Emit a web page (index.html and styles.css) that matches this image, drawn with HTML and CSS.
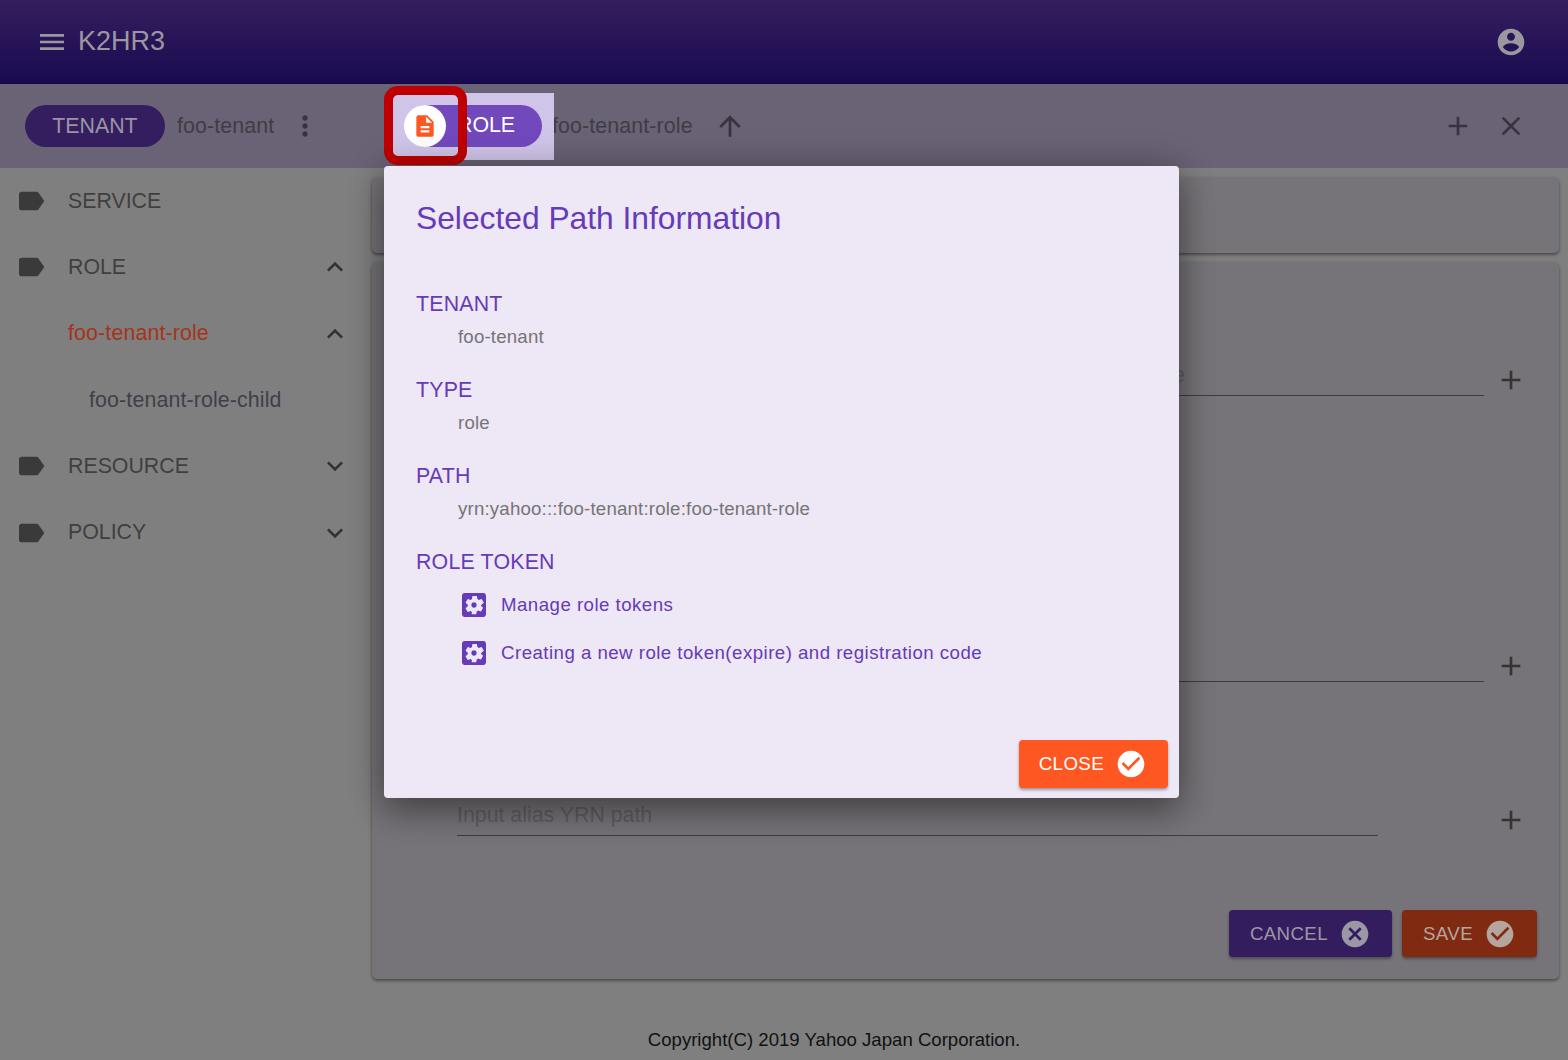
FILE: index.html
```html
<!DOCTYPE html>
<html lang="en">
<head>
    <meta charset="UTF-8">
    <title>K2HR3</title>
    <link rel="stylesheet" href="styles.css">
</head>
<body>
    <svg class="icon-defs" aria-hidden="true">
        <symbol id="i-menu" viewBox="0 0 24 24"><path d="M3 18h18v-2H3v2zm0-5h18v-2H3v2zm0-7v2h18V6H3z"/></symbol>
        <symbol id="i-account" viewBox="0 0 24 24"><path d="M12 2C6.48 2 2 6.48 2 12s4.48 10 10 10 10-4.48 10-10S17.52 2 12 2zm0 3c1.66 0 3 1.34 3 3s-1.34 3-3 3-3-1.34-3-3 1.34-3 3-3zm0 14.2c-2.5 0-4.71-1.28-6-3.22.03-1.99 4-3.08 6-3.08 1.99 0 5.97 1.09 6 3.08-1.29 1.94-3.5 3.22-6 3.22z"/></symbol>
        <symbol id="i-more" viewBox="0 0 24 24"><path d="M12 8c1.1 0 2-.9 2-2s-.9-2-2-2-2 .9-2 2 .9 2 2 2zm0 2c-1.1 0-2 .9-2 2s.9 2 2 2 2-.9 2-2-.9-2-2-2zm0 6c-1.1 0-2 .9-2 2s.9 2 2 2 2-.9 2-2-.9-2-2-2z"/></symbol>
        <symbol id="i-doc" viewBox="0 0 24 24"><path d="M14 2H6c-1.1 0-1.99.9-1.99 2L4 20c0 1.1.89 2 1.99 2H18c1.1 0 2-.9 2-2V8l-6-6zm2 16H8v-2h8v2zm0-4H8v-2h8v2zm-3-5V3.5L18.5 9H13z"/></symbol>
        <symbol id="i-up" viewBox="0 0 24 24"><path d="M4 12l1.41 1.41L11 7.83V20h2V7.83l5.58 5.59L20 12l-8-8-8 8z"/></symbol>
        <symbol id="i-add" viewBox="0 0 24 24"><path d="M19 13h-6v6h-2v-6H5v-2h6V5h2v6h6v2z"/></symbol>
        <symbol id="i-close" viewBox="0 0 24 24"><path d="M19 6.41L17.59 5 12 10.59 6.41 5 5 6.41 10.59 12 5 17.59 6.41 19 12 13.41 17.59 19 19 17.59 13.41 12 19 6.41z"/></symbol>
        <symbol id="i-label" viewBox="0 0 24 24"><path d="M17.63 5.84C17.27 5.33 16.67 5 16 5L5 5.01C3.9 5.01 3 5.9 3 7v10c0 1.1.9 1.99 2 1.99L16 19c.67 0 1.27-.33 1.63-.84L22 12l-4.37-6.16z"/></symbol>
        <symbol id="i-less" viewBox="0 0 24 24"><path d="M12 8l-6 6 1.41 1.41L12 10.83l4.59 4.58L18 14z"/></symbol>
        <symbol id="i-expand" viewBox="0 0 24 24"><path d="M16.59 8.59L12 13.17 7.41 8.59 6 10l6 6 6-6z"/></symbol>
        <symbol id="i-check" viewBox="0 0 24 24"><path d="M12 2C6.48 2 2 6.48 2 12s4.48 10 10 10 10-4.48 10-10S17.52 2 12 2zm-2 15l-5-5 1.41-1.41L10 14.17l7.59-7.59L19 8l-9 9z"/></symbol>
        <symbol id="i-cancel" viewBox="0 0 24 24"><path d="M12 2C6.47 2 2 6.47 2 12s4.47 10 10 10 10-4.47 10-10S17.53 2 12 2zm5 13.59L15.59 17 12 13.41 8.41 17 7 15.59 10.59 12 7 8.41 8.41 7 12 10.59 15.59 7 17 8.41 13.41 12 17 15.59z"/></symbol>
        <symbol id="i-gear" viewBox="0 0 24 24"><path d="M12 10c-1.1 0-2 .9-2 2s.9 2 2 2 2-.9 2-2-.9-2-2-2zm7-7H5c-1.1 0-2 .9-2 2v14c0 1.1.9 2 2 2h14c1.1 0 2-.9 2-2V5c0-1.1-.9-2-2-2zm-1.75 9c0 .23-.02.46-.05.68l1.48 1.16c.13.11.17.3.08.45l-1.4 2.42c-.09.15-.27.21-.43.15l-1.74-.7c-.36.28-.76.51-1.18.69l-.26 1.85c-.03.17-.18.3-.35.3h-2.8c-.17 0-.32-.13-.35-.3L10.5 17.2c-.43-.18-.82-.41-1.18-.69l-1.74.7c-.16.06-.34 0-.43-.15l-1.4-2.42c-.09-.15-.05-.34.08-.45l1.48-1.16c-.03-.23-.05-.46-.05-.69 0-.23.02-.46.05-.68l-1.48-1.16c-.13-.11-.17-.3-.08-.45l1.4-2.42c.09-.15.27-.21.43-.15l1.74.7c.36-.28.76-.51 1.18-.69l.26-1.85c.03-.17.18-.3.35-.3h2.8c.17 0 .32.13.35.3l.26 1.85c.43.18.82.41 1.18.69l1.74-.7c.16-.06.34 0 .43.15l1.4 2.42c.09.15.05.34-.08.45l-1.48 1.16c.03.23.05.46.05.69z"/></symbol>
    </svg>

    <header class="appbar">
        <svg class="icon appbar-menu"><use href="#i-menu"/></svg>
        <span class="appbar-title">K2HR3</span>
        <svg class="icon appbar-account"><use href="#i-account"/></svg>
    </header>

    <div class="toolbar">
        <div class="toolbar-tenant">
            <span class="chip chip-tenant">TENANT</span>
            <span class="toolbar-name">foo-tenant</span>
            <svg class="icon toolbar-more"><use href="#i-more"/></svg>
        </div>
        <div class="toolbar-role">
            <div class="highlight">
                <span class="chip chip-role">
                    <span class="chip-avatar"><svg class="chip-doc"><use href="#i-doc"/></svg></span>
                    <span class="chip-text">ROLE</span>
                </span>
                <span class="highlight-frame"></span>
            </div>
            <span class="toolbar-name toolbar-path">foo-tenant-role</span>
            <svg class="icon toolbar-up"><use href="#i-up"/></svg>
            <svg class="icon toolbar-add"><use href="#i-add"/></svg>
            <svg class="icon toolbar-close"><use href="#i-close"/></svg>
        </div>
    </div>

    <div class="content">
        <nav class="sidebar">
            <div class="nav-item">
                <svg class="icon nav-icon"><use href="#i-label"/></svg>
                <span class="nav-text">SERVICE</span>
            </div>
            <div class="nav-item">
                <svg class="icon nav-icon"><use href="#i-label"/></svg>
                <span class="nav-text">ROLE</span>
                <svg class="icon nav-arrow"><use href="#i-less"/></svg>
            </div>
            <div class="nav-item nav-sub nav-active">
                <span class="nav-text">foo-tenant-role</span>
                <svg class="icon nav-arrow"><use href="#i-less"/></svg>
            </div>
            <div class="nav-item nav-sub nav-child">
                <span class="nav-text">foo-tenant-role-child</span>
            </div>
            <div class="nav-item">
                <svg class="icon nav-icon"><use href="#i-label"/></svg>
                <span class="nav-text">RESOURCE</span>
                <svg class="icon nav-arrow"><use href="#i-expand"/></svg>
            </div>
            <div class="nav-item">
                <svg class="icon nav-icon"><use href="#i-label"/></svg>
                <span class="nav-text">POLICY</span>
                <svg class="icon nav-arrow"><use href="#i-expand"/></svg>
            </div>
        </nav>

        <main class="main">
            <section class="card card-top"></section>
            <section class="card card-form">
                <div class="field-row row-hosts">
                    <!-- rest of this placeholder is behind the dialog -->
                    <div class="field field-clipped">e</div>
                    <svg class="icon field-add"><use href="#i-add"/></svg>
                </div>
                <div class="field-row row-ips">
                    <div class="field"></div>
                    <svg class="icon field-add"><use href="#i-add"/></svg>
                </div>
                <div class="field-row row-alias">
                    <div class="field field-short">Input alias YRN path</div>
                    <svg class="icon field-add"><use href="#i-add"/></svg>
                </div>
                <div class="form-actions">
                    <button class="btn btn-cancel">CANCEL<svg class="icon btn-icon"><use href="#i-cancel"/></svg></button>
                    <button class="btn btn-save">SAVE<svg class="icon btn-icon"><use href="#i-check"/></svg></button>
                </div>
            </section>
        </main>
    </div>

    <footer class="copyright">Copyright(C) 2019 Yahoo Japan Corporation.</footer>

    <div class="dialog">
        <h2 class="dialog-title">Selected Path Information</h2>
        <div class="dialog-body">
            <h3 class="info-label">TENANT</h3>
            <p class="info-value">foo-tenant</p>
            <h3 class="info-label">TYPE</h3>
            <p class="info-value">role</p>
            <h3 class="info-label">PATH</h3>
            <p class="info-value">yrn:yahoo:::foo-tenant:role:foo-tenant-role</p>
            <h3 class="info-label">ROLE TOKEN</h3>
            <div class="token-link">
                <svg class="icon token-icon"><use href="#i-gear"/></svg>
                <span>Manage role tokens</span>
            </div>
            <div class="token-link">
                <svg class="icon token-icon"><use href="#i-gear"/></svg>
                <span>Creating a new role token(expire) and registration code</span>
            </div>
        </div>
        <div class="dialog-actions">
            <button class="btn btn-close">CLOSE<svg class="icon btn-icon"><use href="#i-check"/></svg></button>
        </div>
    </div>
</body>
</html>
```

FILE: styles.css
```css
* {
    box-sizing: border-box;
}
html, body {
    height: 100%;
}
body {
    margin: 0;
    position: relative;
    overflow: hidden;
    background: #7f7f7f;
    color: #3f3f3f;
    font-family: "Liberation Sans", Arial, sans-serif;
    font-size: 21.33px;
}
.icon-defs {
    display: none;
}
.icon {
    width: 32px;
    height: 32px;
    flex: none;
    fill: currentColor;
}

/* top bar */
.appbar {
    height: 84px;
    display: flex;
    align-items: center;
    padding: 0 41px 0 36px;
    background: linear-gradient(#351e5e, #190a50);
    border-bottom: 1px solid #140848;
    color: #9b979f;
}
.appbar-title {
    margin-left: 10px;
    font-size: 27px;
}
.appbar-account {
    margin-left: auto;
}

/* tenant / role bar */
.toolbar {
    height: 84px;
    display: flex;
    align-items: center;
    background: #6a6275;
    color: #38343f;
}
.toolbar-tenant {
    width: 372px;
    flex: none;
    display: flex;
    align-items: center;
    padding-left: 25px;
}
.toolbar-name {
    color: #403c46;
    font-size: 21.33px;
    letter-spacing: .13px;
}
.toolbar-tenant .toolbar-name {
    margin-left: 12px;
}
.toolbar-more {
    margin-left: 15px;
}
.toolbar-role {
    flex: 1;
    display: flex;
    align-items: center;
    padding-right: 41px;
}
.chip {
    height: 42px;
    display: inline-flex;
    align-items: center;
    border-radius: 21px;
}
.chip-tenant {
    width: 140px;
    justify-content: center;
    background: #341e5f;
    color: #9a95a1;
}
.highlight {
    position: relative;
    width: 161px;
    height: 67px;
    margin-left: 21px;
    padding: 12px;
    background: #d0c5e9;
}
.chip-role {
    width: 137px;
    background: #7248bd;
    color: #fff;
}
.chip-avatar {
    width: 42px;
    height: 42px;
    display: flex;
    align-items: center;
    justify-content: center;
    margin-left: -1px;
    border-radius: 50%;
    background: #fff;
}
.chip-doc {
    width: 26px;
    height: 26px;
    fill: #ff5722;
}
.chip-text {
    margin-left: 11px;
}
.highlight-frame {
    position: absolute;
    left: -9px;
    top: -7px;
    width: 83px;
    height: 79px;
    border: 9px solid #c00000;
    border-radius: 14px;
}
.toolbar-path {
    margin-left: -2px;
}
.toolbar-up {
    margin-left: 21px;
}
.toolbar-add {
    margin-left: auto;
}
.toolbar-close {
    margin-left: 21px;
}

/* page content */
.content {
    display: flex;
}
.sidebar {
    width: 372px;
    flex: none;
}
.nav-item {
    height: 66.33px;
    display: flex;
    align-items: center;
    padding-left: 68px;
    padding-right: 21px;
}
.nav-icon {
    margin-left: -53px;
    margin-right: 21px;
    color: #3a3a3a;
}
.nav-arrow {
    margin-left: auto;
    color: #333;
}
.nav-sub {
    letter-spacing: .14px;
}
.nav-active {
    color: #a5341a;
}
.nav-child {
    padding-left: 89px;
    color: #3f3f49;
}
.main {
    flex: 1;
    padding: 10px 9px 0 0;
}
.card {
    border-radius: 5px;
    background: #777479;
    box-shadow: 0 2px 3px rgba(0, 0, 0, .35), 0 0 4px rgba(0, 0, 0, .15);
}
.card-top {
    height: 75px;
}
.card-form {
    height: 716px;
    margin-top: 10px;
    padding-top: 101px;
}
.field-row {
    display: flex;
    align-items: flex-start;
    padding: 0 32px 0 85px;
}
.row-ips {
    margin-top: 254px;
}
.row-alias {
    margin-top: 122px;
}
.field {
    flex: 1;
    height: 32px;
    padding-top: 1px;
    line-height: 20px;
    white-space: nowrap;
    border-bottom: 1px solid #3e3c41;
    color: #5f5d62;
}
.field-clipped {
    padding-left: 716px;
}
.field-short {
    flex: none;
    width: 921px;
    margin-right: 106px;
}
.field-add {
    margin-left: 11px;
    color: #333;
}
.form-actions {
    display: flex;
    justify-content: flex-end;
    gap: 10px;
    margin-top: 74px;
    padding-right: 22px;
}
.btn {
    height: 47px;
    display: inline-flex;
    align-items: center;
    padding: 0 21px;
    border: 0;
    border-radius: 4px;
    font-family: inherit;
    font-size: 18.67px;
    letter-spacing: .4px;
    box-shadow: 0 2px 3px rgba(0, 0, 0, .35);
}
.btn-icon {
    margin-left: 11px;
}
.btn-cancel {
    background: #341d5f;
    color: #9c97a4;
}
.btn-save {
    background: #802b11;
    color: #b4a69f;
}
.copyright {
    margin-top: 50px;
    padding-left: 100px;
    text-align: center;
    color: #111;
    font-size: 18.6px;
}

/* dialog */
.dialog {
    position: absolute;
    left: 384px;
    top: 166px;
    width: 795px;
    height: 632px;
    display: flex;
    flex-direction: column;
    border-radius: 4px;
    background: #ede7f6;
    box-shadow: 0 16px 34px rgba(0, 0, 0, .32), 0 0 36px rgba(0, 0, 0, .22);
}
.dialog-title {
    margin: 32px 32px 0;
    color: #673ab7;
    font-size: 31.75px;
    font-weight: 400;
    line-height: 40px;
}
.dialog-body {
    margin-top: 50px;
    padding: 0 32px;
}
.info-label {
    height: 33px;
    margin: 0;
    color: #673ab7;
    font-size: 21.33px;
    font-weight: 400;
    line-height: 32px;
    letter-spacing: .2px;
}
.info-value {
    height: 32px;
    margin: 0 0 21px 42px;
    color: #757575;
    font-size: 18.67px;
    line-height: 32px;
    letter-spacing: .18px;
}
.token-link {
    height: 48px;
    display: flex;
    align-items: center;
    margin-left: 42px;
    color: #673ab7;
    font-size: 18.67px;
    letter-spacing: .47px;
}
.token-link:first-of-type {
    margin-top: 2px;
}
.token-icon {
    margin-right: 11px;
}
.dialog-actions {
    display: flex;
    justify-content: flex-end;
    margin-top: auto;
    padding: 0 11px 10px 0;
}
.btn-close {
    height: 48px;
    background: #ff5722;
    color: #fff;
    padding: 0 21px 0 20px;
}
```
